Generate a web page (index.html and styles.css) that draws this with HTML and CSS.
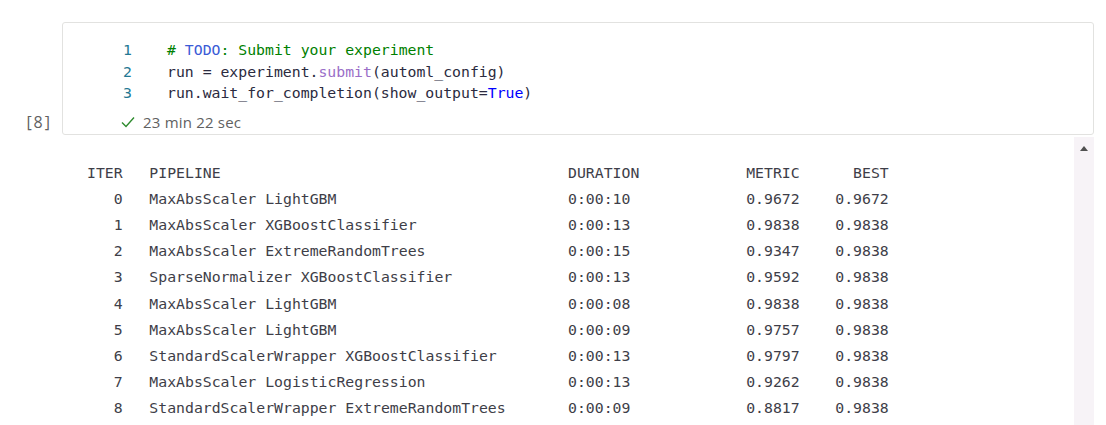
FILE: index.html
```html
<!DOCTYPE html>
<html>
<head>
<meta charset="utf-8">
<link rel="stylesheet" href="styles.css">
</head>
<body>
<div class="cell">
  <div class="prompt">[8]</div>
  <div class="box">
    <div class="code">
      <div class="line"><span class="ln">1</span><span class="src"><span class="cm"># </span><span class="todo">TODO</span><span class="cm">: Submit your experiment</span></span></div>
      <div class="line"><span class="ln">2</span><span class="src">run = experiment.<span class="fn">submit</span>(automl_config)</span></div>
      <div class="line"><span class="ln">3</span><span class="src">run.wait_for_completion(show_output=<span class="kw">True</span>)</span></div>
    </div>
    <div class="status">
      <svg class="check" width="14" height="12" viewBox="0 0 14 12"><path d="M1 6.5 L5 10.5 L13 1.5" fill="none" stroke="#2e8b2e" stroke-width="1.4"/></svg>
      <span class="time">23 min 22 sec</span>
    </div>
  </div>
</div>
<div class="output">
  <div class="content">
    <div class="table">
      <div class="c iter">ITER</div><div class="c pipe">PIPELINE</div><div class="c">DURATION</div><div class="c">METRIC</div><div class="c best">BEST</div>
      <div class="c iter">0</div><div class="c pipe">MaxAbsScaler LightGBM</div><div class="c">0:00:10</div><div class="c">0.9672</div><div class="c best">0.9672</div>
      <div class="c iter">1</div><div class="c pipe">MaxAbsScaler XGBoostClassifier</div><div class="c">0:00:13</div><div class="c">0.9838</div><div class="c best">0.9838</div>
      <div class="c iter">2</div><div class="c pipe">MaxAbsScaler ExtremeRandomTrees</div><div class="c">0:00:15</div><div class="c">0.9347</div><div class="c best">0.9838</div>
      <div class="c iter">3</div><div class="c pipe">SparseNormalizer XGBoostClassifier</div><div class="c">0:00:13</div><div class="c">0.9592</div><div class="c best">0.9838</div>
      <div class="c iter">4</div><div class="c pipe">MaxAbsScaler LightGBM</div><div class="c">0:00:08</div><div class="c">0.9838</div><div class="c best">0.9838</div>
      <div class="c iter">5</div><div class="c pipe">MaxAbsScaler LightGBM</div><div class="c">0:00:09</div><div class="c">0.9757</div><div class="c best">0.9838</div>
      <div class="c iter">6</div><div class="c pipe">StandardScalerWrapper XGBoostClassifier</div><div class="c">0:00:13</div><div class="c">0.9797</div><div class="c best">0.9838</div>
      <div class="c iter">7</div><div class="c pipe">MaxAbsScaler LogisticRegression</div><div class="c">0:00:13</div><div class="c">0.9262</div><div class="c best">0.9838</div>
      <div class="c iter">8</div><div class="c pipe">StandardScalerWrapper ExtremeRandomTrees</div><div class="c">0:00:09</div><div class="c">0.8817</div><div class="c best">0.9838</div>
    </div>
  </div>
  <div class="scrollbar"><div class="arrow"></div></div>
</div>
</body>
</html>
```

FILE: styles.css
```css
html, body {
  margin: 0;
  padding: 0;
  background: #ffffff;
  width: 1106px;
  height: 425px;
  overflow: hidden;
}

.cell {
  display: grid;
  grid-template-columns: 62px 1032px;
  margin-top: 22px;
}

.prompt {
  align-self: end;
  font-family: "Open Sans", "Noto Sans", sans-serif;
  font-size: 16px;
  letter-spacing: 2px;
  line-height: 20px;
  color: #616161;
  text-align: right;
  padding-right: 10px;
  margin-bottom: 3px;
}

.box {
  border: 1px solid #e2e2e0;
  border-radius: 3px;
  box-sizing: border-box;
  height: 113px;
  padding-top: 16px;
}

.code {
  font-family: "DejaVu Sans Mono", monospace;
  font-size: 14.8px;
  line-height: 21.5px;
  color: #2b2b40;
}

.line {
  display: flex;
  white-space: pre;
}

.ln {
  width: 69px;
  text-align: right;
  color: #237893;
}

.src {
  margin-left: 35px;
}

.cm { color: #008000; }
.todo { color: #3b5bd6; }
.fn { color: #9a6ec8; }
.kw { color: #0000ff; }

.status {
  display: flex;
  align-items: center;
  height: 20px;
  margin-top: 8.5px;
  padding-left: 58px;
}

.check {
  display: block;
}

.time {
  margin-left: 8px;
  font-family: "Open Sans", "Noto Sans", sans-serif;
  font-size: 15px;
  letter-spacing: 0.2px;
  color: #616161;
}

.output {
  display: flex;
  margin-left: 62px;
  width: 1032px;
  margin-top: 2px;
  height: 288px;
}

.content {
  flex: 1;
  padding-top: 22px;
  padding-left: 25px;
}

.table {
  display: grid;
  grid-template-columns: 4ch 50ch 20ch 6ch 10ch;
  grid-auto-rows: 26.2px;
  align-items: center;
  font-family: "DejaVu Sans Mono", monospace;
  font-size: 14.8px;
  color: #3e3e48;
  white-space: pre;
}

.iter { text-align: right; }
.pipe { padding-left: 3ch; }
.best { text-align: right; }

.scrollbar {
  width: 20px;
  background: #f7f3f7;
  display: flex;
  justify-content: center;
  padding-top: 9px;
  box-sizing: border-box;
}

.arrow {
  width: 0;
  height: 0;
  border-left: 4.5px solid transparent;
  border-right: 4.5px solid transparent;
  border-bottom: 5px solid #505050;
}
```
